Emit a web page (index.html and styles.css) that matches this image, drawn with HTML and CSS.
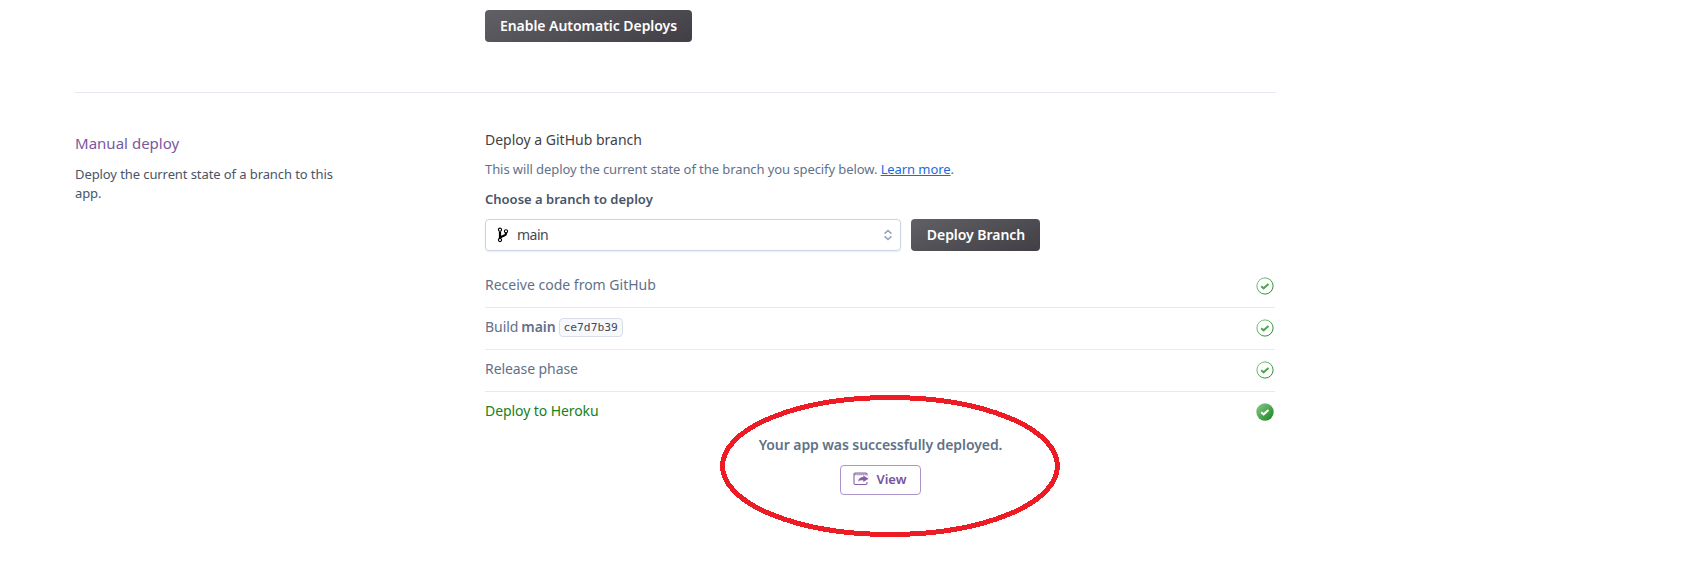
FILE: index.html
```html
<!DOCTYPE html>
<html lang="en">
<head>
<meta charset="utf-8">
<title>Deploy</title>
<link rel="stylesheet" href="styles.css">
</head>
<body>
<svg class="defs" width="0" height="0" aria-hidden="true">
  <defs>
    <linearGradient id="green" x1="0" y1="0" x2="1" y2="1"><stop offset="0" stop-color="#8bcb8e"/><stop offset="1" stop-color="#15841b"/></linearGradient>
    <symbol id="check" viewBox="0 0 18 18"><circle cx="9" cy="9" r="8.1" fill="none" stroke="url(#green)" stroke-width="1"/><path d="M5.2 9.2 7.6 11.3 12.5 6.9" fill="none" stroke="#4fa654" stroke-width="2"/></symbol>
  </defs>
</svg>
<main class="page">
  <section class="auto"><button class="btn enable"><span>Enable Automatic Deploys</span></button></section>
  <section class="manual">
    <aside class="side">
      <h2 class="title"><span>Manual deploy</span></h2>
      <p class="summary"><span>Deploy the current state of a branch to this</span> app.</p>
    </aside>
    <div class="content">
      <h3 class="heading"><span>Deploy a GitHub branch</span></h3>
      <p class="hint"><span>This will deploy the current state of the branch you specify below.</span> <a class="link" href="#">Learn more</a>.</p>
      <label class="label"><span>Choose a branch to deploy</span></label>
      <div class="controls">
        <div class="select">
          <svg class="branch" width="12" height="16" viewBox="0 0 12 16" fill="none" stroke="#000"><path d="M3 4.5v7" stroke-width="2.2"/><path d="M9 5.7v1C9 9 5.5 8.2 3.4 10.6" stroke-width="2.2"/><circle cx="3" cy="2.7" r="1.6" fill="#fff" stroke-width="1.1"/><circle cx="9" cy="4.3" r="1.6" fill="#fff" stroke-width="1.1"/><circle cx="3" cy="13" r="1.6" fill="#fff" stroke-width="1.1"/></svg>
          <span class="value">main</span>
          <svg class="arrows" width="10" height="12" viewBox="0 0 10 12" fill="none" stroke="#96a3b6" stroke-width="1.6"><path d="M1.6 4.6 5 1.5l3.4 3.1M1.6 7.4 5 10.5l3.4-3.1"/></svg>
        </div>
        <button class="btn deploy"><span>Deploy Branch</span></button>
      </div>
      <ul class="steps">
        <li class="step"><span class="receive">Receive code from GitHub</span><svg class="check"><use href="#check"/></svg></li>
        <li class="step"><span class="build"><span class="word">Build</span> <b class="ref">main</b><code class="sha">ce7d7b39</code></span><svg class="check"><use href="#check"/></svg></li>
        <li class="step"><span class="release">Release phase</span><svg class="check"><use href="#check"/></svg></li>
        <li class="step done"><span class="heroku">Deploy to Heroku</span><svg class="check" viewBox="0 0 18 18"><circle cx="9" cy="9" r="8.7" fill="url(#green)"/><path d="M5.2 9.2 7.6 11.3 12.5 6.9" fill="none" stroke="#fff" stroke-width="2"/></svg></li>
      </ul>
      <div class="result">
        <p class="message"><span>Your app was successfully deployed.</span></p>
        <button class="view"><svg width="16" height="14" viewBox="0 0 16 14" fill="none" stroke="#8560a8"><path d="M14 3.6V2.2Q14 1 12.8 1H2.2Q1 1 1 2.2v9.1q0 1.2 1.2 1.2h10.6q1.2 0 1.2-1.2V10" stroke-width="1.1"/><path d="M1.5 2.4h12" stroke-width="1.8" stroke-dasharray="1.2 .8"/><path d="M5.2 9.7C5.4 6.6 7.3 5.2 10.3 5.1V3.4L15.6 6.7l-5.3 3.4V8.2C8 8 6.4 8.3 5.2 9.7Z" fill="#8560a8" stroke="none"/></svg><span>View</span></button>
      </div>
    </div>
  </section>
</main>
<svg class="marker" width="342" height="144" viewBox="0 0 342 144"><ellipse cx="171" cy="72" rx="167.5" ry="68.5" fill="none" stroke="#ed1c24" stroke-width="5" shape-rendering="crispEdges"/></svg>
</body>
</html>
```
FILE: styles.css
```css
* { box-sizing: border-box; }
body { margin: 0; background: #fff; font-family: "Noto Sans", "Open Sans", sans-serif; font-size: 14px; color: #596981; width: 1691px; height: 563px; overflow: hidden; }
h2, h3, p, ul { margin: 0; padding: 0; font-weight: 400; }
button { font-family: inherit; padding: 0; }
.defs { position: absolute; }
.page { width: 1201px; margin-left: 75px; }
.auto { height: 93px; padding: 10px 0 0 410px; border-bottom: 1px solid #e6e9f2; }
.btn { height: 32px; border: 0; border-radius: 4px; background: linear-gradient(160deg, #616065, #413f45); color: #fff; font-size: 14px; font-weight: 600; line-height: 28px; white-space: nowrap; padding-bottom: 1px; }
.enable { width: 207px; letter-spacing: -.04px; }
.deploy { width: 129px; padding-left: 1px; letter-spacing: -.04px; }
.manual { display: grid; grid-template-columns: 410px 791px; }
.side { padding: 38px 0 0; }
.title { font-size: 15px; line-height: 24px; color: #79589f; white-space: nowrap; letter-spacing: .02px; }
.summary { width: 280px; margin-top: 10px; font-size: 13px; line-height: 19px; color: #475569; letter-spacing: -.09px; }
.content { padding-top: 36px; }
.heading { font-size: 14px; line-height: 21px; color: #3f3f44; }
.hint { margin-top: 9px; font-size: 13px; line-height: 20px; color: #62718a; white-space: nowrap; letter-spacing: -.08px; }
.link { color: #1a6be0; text-decoration: underline; }
.label { display: block; margin-top: 10px; font-size: 13px; font-weight: 600; line-height: 20px; color: #475468; }
.controls { display: flex; gap: 10px; margin-top: 10px; }
.select { display: flex; align-items: center; width: 416px; height: 32px; padding: 0 7px 0 11px; border: 1px solid #cbd4e6; border-radius: 4px; box-shadow: 0 1px 2px #e8ecf4; color: #3f4a58; }
.value { flex: 1; margin-left: 8px; line-height: 28px; padding-bottom: 1px; letter-spacing: -.5px; }
.steps { list-style: none; margin-top: 15px; width: 790px; }
.step { display: flex; align-items: center; justify-content: space-between; height: 42px; border-bottom: 1px solid #e6e9f2; padding: 0 1px 2px 0; color: #62718a; }
.step > span { padding-bottom: 2px; }
.done { border: 0; color: #168120; padding-bottom: 3px; }
.release, .heroku { letter-spacing: -.08px; }
.check { width: 18px; height: 18px; }
.build { display: flex; align-items: center; gap: 3px; letter-spacing: -.05px; }
.ref { font-weight: 600; }
.sha { position: relative; top: 1px; width: 64px; height: 19px; border: 1px solid #d9dee6; border-radius: 4px; background: #f6f8fb; color: #3f4a5d; font: 11.3px/17px "DejaVu Sans Mono", monospace; letter-spacing: 0; text-align: center; }
.result { display: flex; flex-direction: column; align-items: center; }
.message { font-size: 14px; font-weight: 600; line-height: 22px; color: #5f7288; letter-spacing: -.08px; }
.view { display: flex; align-items: center; justify-content: center; gap: 7px; width: 81px; height: 30px; padding: 0 1px 2px 0; margin-top: 9px; border: 1px solid #ab94ca; border-radius: 4px; background: #fff; color: #76549b; font-size: 13px; font-weight: 600; }
.view span { padding-bottom: 1px; }
.marker { position: absolute; left: 719px; top: 394px; }
```
